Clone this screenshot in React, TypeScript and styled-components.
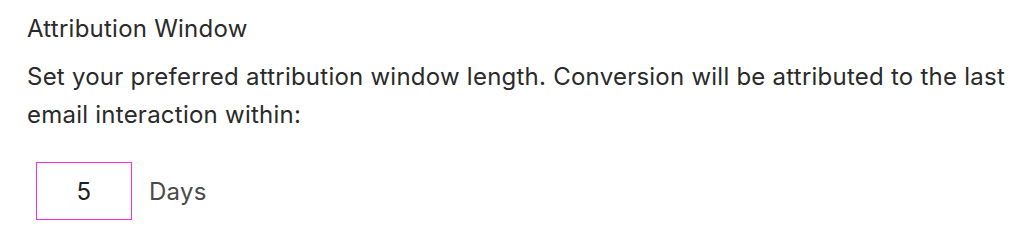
import React from 'react';
import styled, { createGlobalStyle } from 'styled-components';

const GlobalStyle = createGlobalStyle`
  body {
    margin: 0;
    background: #fff;
    font-family: Inter, "Noto Sans", sans-serif;
    letter-spacing: 0.24px;
  }
`;

const Section = styled.section`
  padding: 10px 8px 0 27px;
  color: #222;
`;

const Title = styled.h3`
  margin: 0;
  font-size: 24px;
  font-weight: 400;
  line-height: 38px;
  color: #2a2a2a;
`;

const Description = styled.p`
  margin: 10px 0 0;
  font-size: 24px;
  line-height: 38px;
  color: #2a2a2a;
`;

const Row = styled.div`
  display: flex;
  align-items: center;
  gap: 17px;
  margin-top: 28px;
  padding-left: 9px;
`;

const NumberInput = styled.input`
  box-sizing: border-box;
  width: 96px;
  height: 58px;
  border: 1px solid #f02ef0;
  outline: none;
  text-align: center;
  font-family: inherit;
  font-size: 24px;
  letter-spacing: inherit;
  color: #222;
  background: #fff;
  padding: 0;
`;

const Unit = styled.span`
  font-size: 24px;
  color: #4a4a4a;
`;

export default function App() {
  return (
    <>
      <GlobalStyle />
      <Section>
        <Title>Attribution Window</Title>
        <Description>
          Set your preferred attribution window length. Conversion will be attributed to the last email
          interaction within:
        </Description>
        <Row>
          <NumberInput type="text" defaultValue="5" />
          <Unit>Days</Unit>
        </Row>
      </Section>
    </>
  );
}
